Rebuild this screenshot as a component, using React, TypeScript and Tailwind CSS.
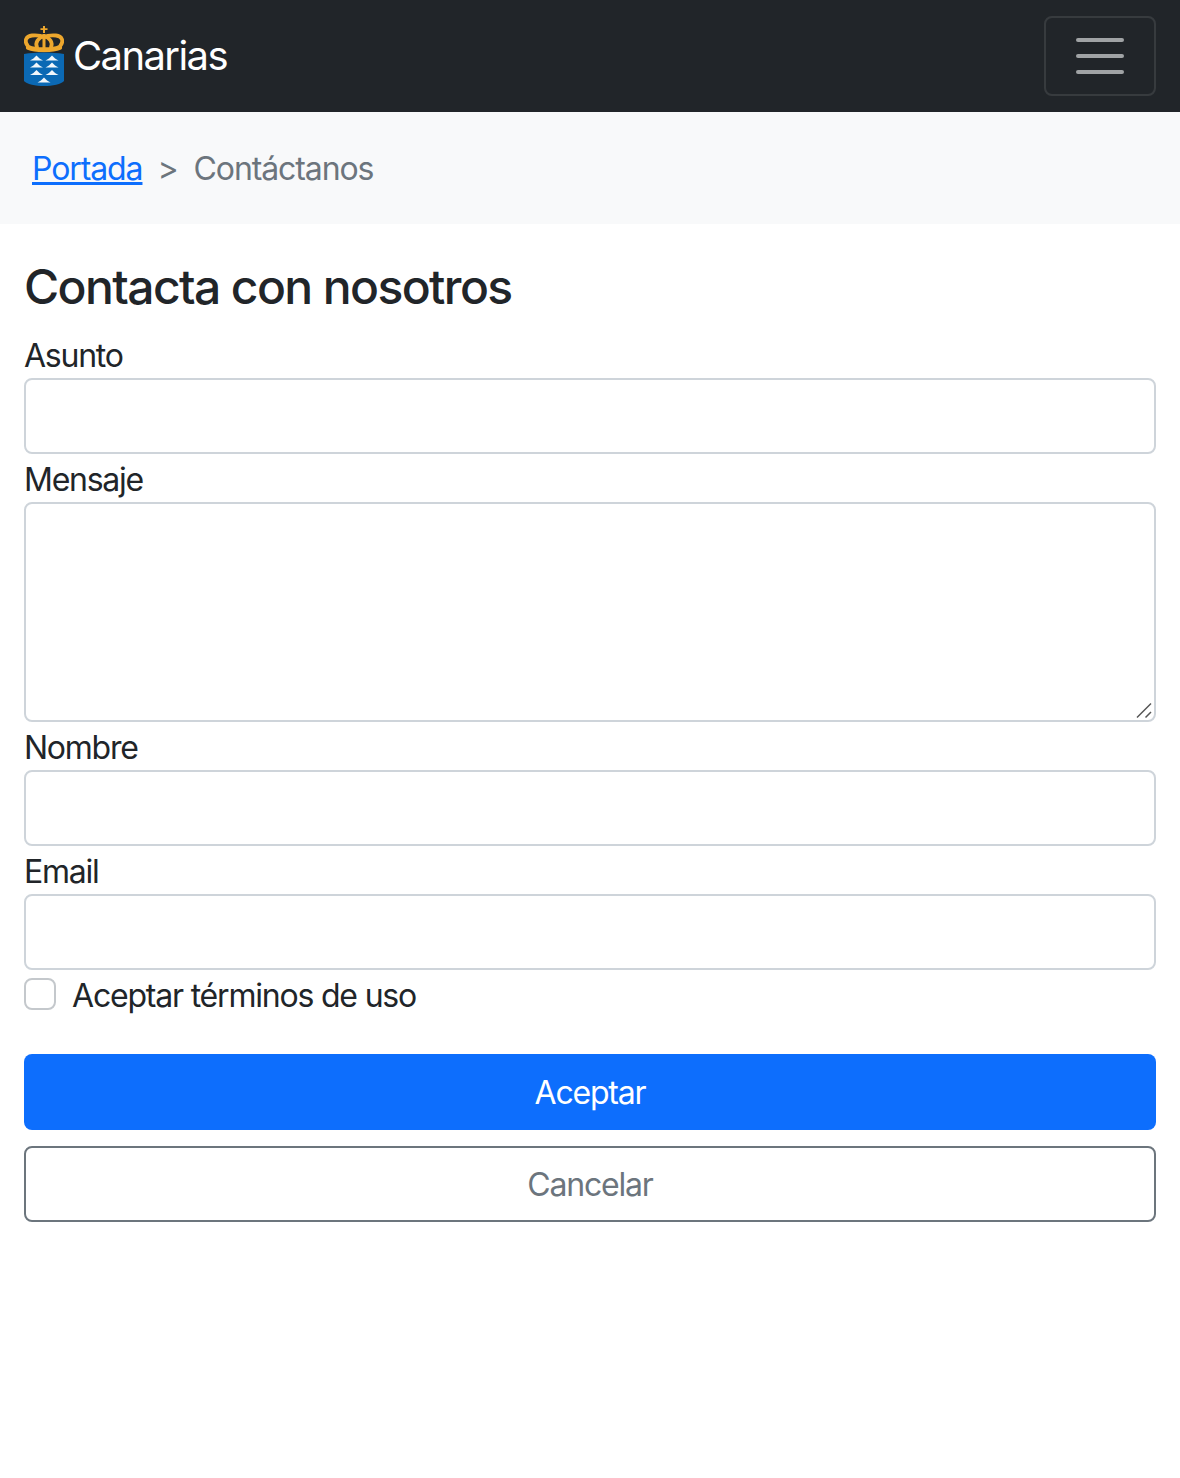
const FONT = "font-['Inter','Liberation_Sans',sans-serif]";

const PEAKS = [
  [36.5, 60.5],
  [52, 60.5],
  [36.5, 67.5],
  [52, 67.5],
  [36.5, 75],
  [52, 75],
  [44, 82.5],
];

function Crest() {
  return (
    <svg width="40" height="60" viewBox="24 26 40 60" className="shrink-0">
      {/* crown */}
      <path d="M43 26h2v2.200h2.500v1.800h-2.500v3h-2v-3h-2.500v-1.800h2.500z" fill="#eda72d" />
      <g fill="none" stroke="#eda72d" strokeWidth="3.800" strokeLinecap="round">
        <path d="M28.500 47.500C35 50.500 53 50.500 59.500 47.500" strokeWidth="5" />
        <path d="M27.500 45.500C24 41 26 36 32 35.500C37 35.200 41 35.500 44 37" />
        <path d="M60.500 45.500C64 41 62 36 56 35.500C51 35.200 47 35.500 44 37" />
        <path d="M37 47C35 42.500 38 38 44 36" />
        <path d="M51 47C53 42.500 50 38 44 36" />
        <path d="M44 36V48" strokeWidth="3" />
      </g>
      {/* shield */}
      <path d="M24 54c12-2 28-2 40 0v27c-2 3-12 5-20 5s-18-2-20-5z" fill="#0b69b4" />
      {PEAKS.map(([x, y]) => (
        <path key={`${x}-${y}`} d={`M${x - 6.500} ${y}c2.500-1 4.500-3 6.500-5c2 2 4 4 6.500 5z`} fill="#f2f7fb" />
      ))}
    </svg>
  );
}

function Field({ label, children }: { label: string; children: React.ReactNode }) {
  return (
    <div>
      <label className="block pt-1 text-[32px] leading-[44px] tracking-[-1.25px] text-[#212529]">{label}</label>
      {children}
    </div>
  );
}

const INPUT = "block w-full h-[76px] rounded-lg border-2 border-[#ced4da] bg-white";

export default function App() {
  return (
    <div className={`min-h-screen bg-white ${FONT}`}>
      {/* Navbar */}
      <nav className="flex h-28 items-center justify-between bg-[#212529] px-6">
        <a className="flex items-center gap-[9px] text-[40px] leading-[60px] tracking-[-1.6px] text-white">
          <Crest />
          Canarias
        </a>
        <button className="flex h-20 w-28 flex-col items-center justify-center gap-3 rounded-lg border-2 border-white/10">
          <span className="h-1 w-12 rounded-sm bg-[#a0a3a5]" />
          <span className="h-1 w-12 rounded-sm bg-[#a0a3a5]" />
          <span className="h-1 w-12 rounded-sm bg-[#a0a3a5]" />
        </button>
      </nav>

      {/* Breadcrumb */}
      <div className="flex h-28 items-center bg-[#f8f9fa] px-8 pt-0.5 text-[32px] tracking-[-1.1px] text-[#6c757d]">
        <a className="text-[#0d6efd] underline">Portada</a>
        <span className="pr-4 pl-[15px]">&gt;</span>
        <span>Contáctanos</span>
      </div>

      <main className="px-6 pt-[34px]">
        <h1 className="mb-[14px] text-[48px] leading-[58px] font-medium tracking-[-1.6px] text-[#212529]">
          Contacta con nosotros
        </h1>
        <form>
          <Field label="Asunto">
            <input className={INPUT} />
          </Field>
          <Field label="Mensaje">
            <div className="relative">
              <textarea className="block h-[220px] w-full resize-none rounded-lg border-2 border-[#ced4da] bg-white" />
              {/* resize grip */}
              <svg width="18" height="18" viewBox="0 0 18 18" className="absolute right-[2px] bottom-[2px]">
                <path d="M1 15.500L15 1.500M9.500 15.500L15 10" stroke="#555" strokeWidth="1.500" />
              </svg>
            </div>
          </Field>
          <Field label="Nombre">
            <input className={INPUT} />
          </Field>
          <Field label="Email">
            <input className={INPUT} />
          </Field>
          <div className="mb-[34px] flex h-[50px] items-center gap-4">
            <span className="-mt-0.5 h-8 w-8 rounded-lg border-2 border-[#c4c8cc] bg-white" />
            <span className="pt-0.5 text-[32px] leading-[48px] tracking-[-1.2px] text-[#212529]">
              Aceptar términos de uso
            </span>
          </div>
          <div className="flex flex-col gap-4">
            <button type="button" className="h-[76px] rounded-lg bg-[#0d6efd] pt-0.5 text-[32px] tracking-[-1.2px] text-white">
              Aceptar
            </button>
            <button
              type="button"
              className="h-[76px] rounded-lg border-2 border-[#6c757d] pt-0.5 text-[32px] tracking-[-1.2px] text-[#6c757d]"
            >
              Cancelar
            </button>
          </div>
        </form>
      </main>
    </div>
  );
}
